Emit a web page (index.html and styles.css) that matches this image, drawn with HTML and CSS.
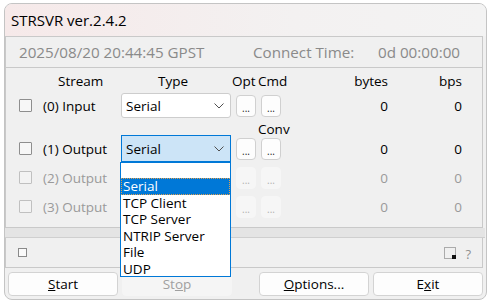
FILE: index.html
```html
<!DOCTYPE html>
<html lang="en">
<head>
    <meta charset="UTF-8">
    <title>STRSVR ver.2.4.2</title>
    <link rel="stylesheet" href="styles.css">
</head>
<body>
<div class="window">
    <div class="titlebar">STRSVR ver.2.4.2</div>

    <div class="timebar">
        <span class="time">2025/08/20 20:44:45 GPST</span>
        <span class="conn-label">Connect Time:</span>
        <span class="conn-val">0d 00:00:00</span>
    </div>

    <div class="streams">
        <div class="row head">
            <span></span>
            <span class="h-stream">Stream</span>
            <span class="h-type">Type</span>
            <span class="h-opt">Opt</span>
            <span class="h-cmd">Cmd</span>
            <span class="num">bytes</span>
            <span class="num">bps</span>
        </div>

        <div class="row">
            <span class="check"></span>
            <span class="label">(0) Input</span>
            <div class="combo"><span>Serial</span><svg class="chev" width="10" height="6" viewBox="0 0 10 6"><polyline points="0.5,0.5 5,5 9.5,0.5" fill="none" stroke="#505050" stroke-width="1"/></svg></div>
            <span class="cell"><button class="dots">...</button></span>
            <span class="cell"><button class="dots">...</button></span>
            <span class="num">0</span>
            <span class="num">0</span>
        </div>

        <div class="conv">Conv</div>

        <div class="row">
            <span class="check"></span>
            <span class="label">(1) Output</span>
            <div class="combo focus"><span>Serial</span><svg class="chev" width="10" height="6" viewBox="0 0 10 6"><polyline points="0.5,0.5 5,5 9.5,0.5" fill="none" stroke="#505050" stroke-width="1"/></svg></div>
            <span class="cell"><button class="dots">...</button></span>
            <span class="cell"><button class="dots">...</button></span>
            <span class="num">0</span>
            <span class="num">0</span>
        </div>

        <div class="row off">
            <span class="check"></span>
            <span class="label">(2) Output</span>
            <span></span>
            <span class="cell"><button class="dots" disabled>...</button></span>
            <span class="cell"><button class="dots" disabled>...</button></span>
            <span class="num">0</span>
            <span class="num">0</span>
        </div>

        <div class="row off">
            <span class="check"></span>
            <span class="label">(3) Output</span>
            <span></span>
            <span class="cell"><button class="dots" disabled>...</button></span>
            <span class="cell"><button class="dots" disabled>...</button></span>
            <span class="num">0</span>
            <span class="num">0</span>
        </div>
    </div>

    <div class="band"></div>

    <div class="status">
        <span class="mini-check"></span>
        <svg class="grip" width="13" height="13" viewBox="0 0 13 13">
            <rect x="0.5" y="0.5" width="11" height="11" fill="none" stroke="#666" stroke-width="1" stroke-dasharray="1 1"/>
            <rect x="8" y="8" width="4" height="4" fill="#111"/>
        </svg>
        <span class="help">?</span>
    </div>

    <div class="buttons">
        <button class="btn"><u>S</u>tart</button>
        <button class="btn" disabled>St<u>o</u>p</button>
        <span class="spacer"></span>
        <button class="btn"><u>O</u>ptions...</button>
        <button class="btn">E<u>x</u>it</button>
    </div>

    <ul class="droplist">
        <li class="blank"></li>
        <li class="sel">Serial</li>
        <li>TCP Client</li>
        <li>TCP Server</li>
        <li>NTRIP Server</li>
        <li>File</li>
        <li>UDP</li>
    </ul>
</div>
</body>
</html>
```

FILE: styles.css
```css
body {
    margin: 0;
    background: #ffffff;
    font-family: "Open Sans", "Noto Sans", sans-serif;
    font-size: 13.5px;
    color: #000;
}
.window {
    position: relative;
    box-sizing: border-box;
    width: 483px;
    height: 297px;
    margin: 3px 0 0 4px;
    border: 1px solid #c4c4c4;
    border-radius: 8px;
    background: #f0f0f0;
    overflow: hidden;
}
.titlebar {
    height: 32px;
    line-height: 32px;
    padding-left: 6px;
    font-size: 15px;
    background: linear-gradient(90deg, #f6e9e9, #f3f1f1 60%, #f3f3f3);
}
.timebar {
    box-sizing: border-box;
    height: 32px;
    margin-right: 3px;
    display: flex;
    align-items: center;
    border: 1px solid #c9c9c9;
    color: #8a8a8a;
    font-size: 15.2px;
}
.time { width: 234px; padding-left: 13px; }
.conn-label { width: 125px; }

.streams {
    box-sizing: border-box;
    height: 160px;
    margin-right: 3px;
    padding-top: 3px;
    border: 1px solid #c9c9c9;
    border-top: none;
}
.row {
    display: grid;
    grid-template-columns: 37px 78px 110px 25px 25px 107px 74px;
    align-items: center;
    height: 29px;
    white-space: nowrap;
}
.row.head { height: 20px; }
.h-stream { padding-left: 15px; }
.h-type { padding-left: 37px; }
.h-opt { padding-left: 1px; }
.h-cmd { padding-left: 2px; }
.num { text-align: right; }
.check {
    box-sizing: border-box;
    width: 13px;
    height: 13px;
    margin-left: 13px;
    border: 1px solid #8e8e8e;
    background: #f7f7f7;
    border-radius: 1px;
}
.combo {
    box-sizing: border-box;
    height: 25px;
    display: flex;
    align-items: center;
    justify-content: space-between;
    padding: 0 6px 0 4px;
    background: #ffffff;
    border: 1px solid #cdcdcd;
    border-radius: 3px;
}
.combo.focus {
    height: 27px;
    background: #cce4f7;
    border-color: #0078d7;
    border-radius: 0;
}
.cell { display: flex; justify-content: flex-end; }
.dots {
    box-sizing: border-box;
    width: 20px;
    height: 22px;
    padding: 5px 0 0;
    font-family: inherit;
    font-size: 10px;
    color: #222;
    background: #fdfdfd;
    border: 1px solid #d0d0d0;
    border-radius: 4px;
}
.dots:disabled {
    background: #f6f6f6;
    border-color: #f6f6f6;
    color: #b0b0b0;
}
.conv {
    height: 14px;
    line-height: 18px;
    padding-left: 252px;
}
.off { color: #9a9a9a; }
.off .check { border-color: #c0c0c0; background: #f3f3f3; }

.band {
    height: 9px;
    margin-right: 1px;
    background: #e4e4e4;
    border-bottom: 1px solid #cfcfcf;
}
.status {
    box-sizing: border-box;
    height: 30px;
    margin-right: 3px;
    display: flex;
    align-items: center;
    border: 1px solid #c9c9c9;
    border-top: none;
}
.mini-check {
    box-sizing: border-box;
    width: 9px;
    height: 9px;
    margin-left: 12px;
    border: 1px solid #8a8a8a;
    background: #fafafa;
}
.grip { margin-left: auto; margin-right: 8px; margin-top: 2px; }
.help { color: #909090; font-size: 13px; margin-right: 11px; margin-top: 3px; }

.buttons {
    display: flex;
    gap: 4px;
    padding: 4px 0 0 3px;
}
.btn {
    box-sizing: border-box;
    width: 110px;
    height: 24px;
    font-family: inherit;
    font-size: 13.5px;
    color: #000;
    background: #fdfdfd;
    border: 1px solid #d3d3d3;
    border-radius: 4px;
}
.btn:disabled {
    background: #f5f5f5;
    border-color: #f5f5f5;
    color: #a0a0a0;
}
.spacer { width: 19px; }

.droplist {
    position: absolute;
    left: 115px;
    top: 158px;
    box-sizing: border-box;
    width: 111px;
    height: 115px;
    margin: 0;
    padding: 0;
    list-style: none;
    background: #ffffff;
    border: 1px solid #0078d7;
}
.droplist li {
    height: 16.5px;
    line-height: 16px;
    padding-left: 2px;
}
.droplist li.blank { height: 15px; }
.droplist li.sel {
    background: #0078d7;
    color: #ffffff;
    outline: 1px dotted #e0a050;
    outline-offset: -1px;
}
```
